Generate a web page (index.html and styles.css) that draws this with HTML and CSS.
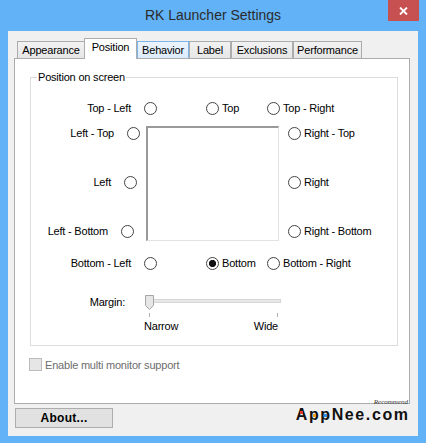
FILE: index.html
```html
<!DOCTYPE html>
<html lang="en">
<head>
  <meta charset="UTF-8" />
  <title>RK Launcher Settings</title>
  <link rel="stylesheet" href="styles.css">
</head>
<body>

  <div class="window">
    <!-- Title bar -->
    <div class="titlebar">
      <div class="title">RK Launcher Settings</div>
      <div class="close">
        <svg width="9" height="8" viewBox="0 0 9 8"><path d="M1 0.5 L8 7.5 M8 0.5 L1 7.5" stroke="#fff" stroke-width="1.8" fill="none"/></svg>
      </div>
    </div>

    <div class="client">
      <div class="tabs">
        <div class="tab t-appearance">Appearance</div>
        <div class="tab t-position active">Position</div>
        <div class="tab t-behavior hover">Behavior</div>
        <div class="tab t-label">Label</div>
        <div class="tab t-exclusions">Exclusions</div>
        <div class="tab t-performance">Performance</div>
      </div>

      <div class="panel">
        <div class="group">
          <span class="legend">Position on screen</span>

          <div class="row">
            <label class="opt rev tl">Top - Left <span class="radio"></span></label>
            <label class="opt tc"><span class="radio"></span>Top</label>
            <label class="opt"><span class="radio"></span>Top - Right</label>
          </div>

          <div class="middle">
            <div class="side side-left">
              <label class="opt rev lt">Left - Top <span class="radio"></span></label>
              <label class="opt rev lm">Left <span class="radio"></span></label>
              <label class="opt rev lb">Left - Bottom <span class="radio"></span></label>
            </div>
            <div class="screen"></div>
            <div class="side side-right">
              <label class="opt"><span class="radio"></span>Right - Top</label>
              <label class="opt"><span class="radio"></span>Right</label>
              <label class="opt"><span class="radio"></span>Right - Bottom</label>
            </div>
          </div>

          <div class="row row-bottom">
            <label class="opt rev tl">Bottom - Left <span class="radio"></span></label>
            <label class="opt tc"><span class="radio checked"></span>Bottom</label>
            <label class="opt"><span class="radio"></span>Bottom - Right</label>
          </div>

          <div class="margin">
            <div class="margin-label">Margin:</div>
            <div class="slider">
              <div class="slider-bar">
                <div class="track"></div>
                <svg class="thumb" width="10" height="15" viewBox="0 0 10 15"><path d="M0.5 0.5 H8.5 V10.5 L4.5 14.5 L0.5 10.5 Z" fill="#e6e6e6" stroke="#a6a6a6"/></svg>
              </div>
              <div class="ticks"><span></span><span></span></div>
              <div class="tick-labels"><span>Narrow</span><span>Wide</span></div>
            </div>
          </div>
        </div>

        <label class="check"><span class="checkbox"></span>Enable multi monitor support</label>
      </div>

      <div class="footer">
        <button class="about">About...</button>
        <div class="logo">
          <div class="recommend">Recommend</div>
          <div class="brand"><span class="b-a">A</span><span class="b-p1">p</span><span class="b-p2">p</span>Nee.com</div>
        </div>
      </div>
    </div>
  </div>

</body>
</html>
```

FILE: styles.css
```css
* { box-sizing: border-box; margin:0; padding:0 }
body {
  font-family: 'Liberation Sans', Arial, sans-serif;
  font-size: 11px;
  letter-spacing: -0.2px;
  color: #000;
  background: #fff;
}

.window {
  width: 426px;
  height: 443px;
  background: #62b2f7;
  padding: 0 8px 7px 8px;
  display: flex;
  flex-direction: column;
}

/* title bar */
.titlebar {
  height: 31px;
  display: grid;
  grid-template-columns: 1fr auto 1fr;
  margin: 0 -8px;
}
.title {
  grid-column: 2;
  font-size: 14px;
  letter-spacing: 0;
  line-height: 31px;
  color: #2b2b2b;
}
.close {
  grid-column: 3;
  justify-self: end;
  width: 31px;
  height: 21px;
  margin-right: 7px;
  background: #c75050;
  display: flex;
  align-items: center;
  justify-content: center;
}

.client {
  flex: 1;
  background: #f0f0f0;
  display: flex;
  flex-direction: column;
}

/* tabs */
.tabs {
  height: 20px;
  margin-top: 7px;
  padding-left: 9px;
  display: flex;
  align-items: flex-end;
}
.tab {
  height: 17px;
  border: 1px solid #acacac;
  border-bottom: none;
  background: linear-gradient(#f2f2f2, #e6e6e6);
  text-align: center;
  line-height: 15px;
  padding-top: 1px;
  white-space: nowrap;
}
.tab.active {
  height: 21px;
  margin-bottom: -1px;
  padding-top: 1px;
  background: #fff;
  position: relative;
  z-index: 1;
}
.tab.hover {
  background: linear-gradient(#ecf4fc, #dcecfc);
  border-color: #7eb4ea;
}
.t-appearance { width: 67px; border-right: none }
.t-position { width: 53px }
.t-behavior { width: 52px }
.t-label { width: 42px }
.t-exclusions { width: 62px }
.t-performance { width: 69px }

/* page */
.panel {
  margin-left: 6px;
  width: 396px;
  height: 346px;
  background: #fff;
  border: 1px solid #acacac;
  padding: 18px 0 0 15px;
}

.group {
  position: relative;
  width: 368px;
  border: 1px solid #dcdcdc;
  padding: 24px 0 12px 0;
}
.legend {
  position: absolute;
  top: -8px;
  left: 6px;
  padding: 0 1px;
  line-height: 15px;
  background: #fff;
}

.row { display: flex; }
.row-bottom { margin-top: 16px; }

.opt {
  display: flex;
  align-items: center;
  height: 13px;
  line-height: 13px;
  gap: 3px;
  white-space: nowrap;
}
.opt.rev { justify-content: flex-end; gap: 13px; }
.opt.tl { width: 126px; }
.opt.tc { width: 61px; margin-left: 49px; }

.radio {
  width: 13px;
  height: 13px;
  flex-shrink: 0;
  border: 1px solid #444;
  border-radius: 50%;
  background: #fff;
}
.radio.checked {
  background: radial-gradient(circle, #111 3.3px, #fff 3.9px);
}

.middle {
  display: flex;
  margin-top: 11px;
}
.side {
  display: flex;
  flex-direction: column;
  justify-content: space-between;
  padding: 1px 0 3px;
}
.side-left { width: 115px; align-items: flex-end; }
.side-right { padding-left: 9px; }
.lt { margin-right: 6px; }
.lm { margin-right: 9px; }
.lb { margin-right: 12px; }

.screen {
  width: 133px;
  height: 115px;
  border-top: 2px solid #9a9a9a;
  border-left: 2px solid #9a9a9a;
  border-right: 1px solid #e3e3e3;
  border-bottom: 1px solid #e3e3e3;
}

/* margin slider */
.margin {
  display: flex;
  margin-top: 25px;
}
.margin-label {
  width: 94px;
  height: 15px;
  line-height: 15px;
  text-align: right;
}
.slider {
  width: 138px;
  margin-left: 19px;
}
.slider-bar {
  position: relative;
  height: 15px;
  padding: 4px 0 0 1px;
}
.track {
  width: 136px;
  height: 4px;
  background: #e7e7e7;
  border: 1px solid #d6d6d6;
}
.thumb {
  position: absolute;
  top: 0;
  left: 1px;
}
.ticks {
  display: flex;
  justify-content: space-between;
  height: 4px;
  margin-top: 3px;
  padding: 0 4px 0 5px;
}
.ticks span {
  width: 1px;
  background: #b4b4b4;
}
.tick-labels {
  display: flex;
  justify-content: space-between;
  margin-top: 3px;
  padding-right: 4px;
  line-height: 13px;
}

.check {
  display: flex;
  align-items: center;
  gap: 3px;
  height: 13px;
  margin: 12px 0 0 -1px;
  color: #6d6d6d;
}
.checkbox {
  width: 13px;
  height: 13px;
  border: 1px solid #bcbcbc;
  background: #e6e6e6;
}

/* bottom */
.footer {
  display: flex;
  justify-content: space-between;
  align-items: flex-start;
  margin-top: 4px;
  padding: 0 10px 0 7px;
}
.about {
  width: 98px;
  height: 20px;
  border: 1px solid #adadad;
  background: #e1e1e1;
  font-family: 'Liberation Sans', Arial, sans-serif;
  font-weight: bold;
  font-size: 12px;
  letter-spacing: 0.3px;
  color: #000;
}
.logo {
  margin-top: -10px;
  display: flex;
  flex-direction: column;
  align-items: flex-end;
}
.recommend {
  font-family: 'Liberation Serif', serif;
  font-style: italic;
  font-size: 7px;
  line-height: 8px;
  letter-spacing: 0;
  color: #333;
}
.brand {
  font-size: 16px;
  line-height: 18px;
  font-weight: bold;
  letter-spacing: 1.6px;
  margin-right: -1.6px;
  color: #111;
}
.brand span { position: relative; }
.brand span::after {
  content: '';
  position: absolute;
  width: 3px;
  height: 3px;
}
.b-a::after { background: #e03a2e; left: 4px; top: 5px; }
.b-p1::after { background: #f0a020; left: 4px; top: 8px; }
.b-p2::after { background: #2f8fe0; left: 4px; top: 8px; }
```
